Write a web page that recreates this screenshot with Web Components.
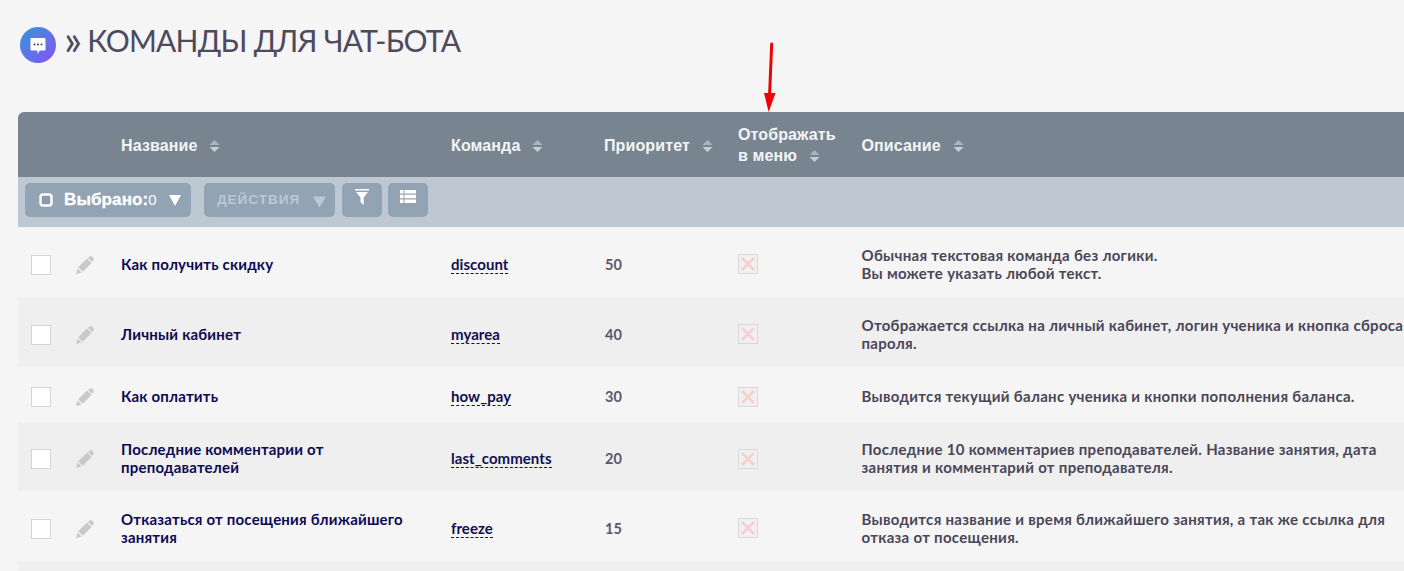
<!DOCTYPE html>
<html lang="ru">
<head>
<meta charset="utf-8">
<title>Команды для чат-бота</title>
<style>
html,body{margin:0;padding:0;background:#f5f5f5;overflow:hidden;height:571px}
body{font-family:"Lato","Liberation Sans",sans-serif;color:#4a4658}
</style>
</head>
<body>
<template id="t-title">
<style>
:host{display:flex;align-items:flex-start;height:112px;box-sizing:border-box;padding:27px 0 0 20px;gap:8px;color:#4d4a5c}
.logo{width:36px;height:36px;flex:none}
h1{margin:-5px 0 0;font:400 30px/36px "Lato",sans-serif;letter-spacing:-.75px;white-space:nowrap}
.q{font-size:42px;line-height:0;margin-right:6px;vertical-align:-3px}
</style>
<svg class="logo" viewBox="0 0 36 36">
<defs><linearGradient id="g" x1="0.1" y1="0.1" x2="0.9" y2="0.9"><stop offset="0" stop-color="#3f8fe0"/><stop offset="1" stop-color="#7b5bee"/></linearGradient></defs>
<circle cx="18" cy="18" r="18" fill="url(#g)"/>
<path d="M11.500 11h13a1 1 0 0 1 1 1v10.500a1 1 0 0 1-1 1h-4.500l-2.500 3.500v-3.500h-6a1 1 0 0 1-1-1V12a1 1 0 0 1 1-1z" fill="#fff"/>
<circle cx="14.500" cy="17.500" r="1" fill="#3c3a55"/><circle cx="18" cy="17.500" r="1" fill="#3c3a55"/><circle cx="21.500" cy="17.500" r="1" fill="#3c3a55"/>
</svg>
<h1><span class="q">»</span>КОМАНДЫ ДЛЯ ЧАТ-БОТА</h1>
</template>

<template id="t-sort">
<style>:host{display:inline-block;width:11px;height:14px;margin-left:var(--gap,12px);vertical-align:-2px}svg{display:block}</style>
<svg width="11" height="14" viewBox="0 0 11 14"><path d="M5.500 1 10.500 6H.5z" fill="#a9b4bd"/><path d="M.5 8h10l-5 5z" fill="#c5ccd3"/></svg>
</template>

<template id="t-table">
<style>
:host{display:block;position:relative;margin-left:18px;width:1386px;--cols:103px 330px 153px 134px 123.500px 1fr}
.wrap{border-radius:6px 0 0 0;overflow:hidden}
</style>
<div class="wrap"><slot></slot></div>
</template>

<template id="t-head">
<style>
:host{display:grid;grid-template-columns:var(--cols);height:65px;box-sizing:border-box;padding-top:1px;background:#78848f;color:#f3f5f6;align-items:center;font:700 16px/21px "Liberation Sans",sans-serif;letter-spacing:.12px}
</style>
<slot></slot>
</template>

<template id="t-bar">
<style>
:host{display:flex;height:50px;background:#bdc8d2;box-sizing:border-box;padding:6px 7px 0;align-items:flex-start}
</style>
<slot></slot>
</template>

<template id="t-btn">
<style>
:host{display:inline-flex;align-items:center;height:34px;background:#92a3b4;border-radius:5px;box-sizing:border-box;color:#fff;font:700 17px/36px "Liberation Sans",sans-serif;white-space:nowrap}
</style>
<slot></slot>
</template>

<template id="t-row">
<style>
:host{display:grid;grid-template-columns:var(--cols);align-items:center;box-sizing:border-box;padding-top:5px;min-height:55px;background:#f5f5f5;font:700 15px/18px "Lato",sans-serif;color:#4a4658}
:host([alt]){background:#efefef}
.sel{display:flex;align-items:center;gap:24px;padding-left:13px}
.box{width:18px;height:18px;background:#fff;border:1px solid #d4d4d4;flex:none}
.name{color:#0c0a52;padding-right:25px;letter-spacing:.2px;margin-top:-2px}
.cmd{margin-top:-1px}
.cmd span{color:#12104f;border-bottom:1px dashed #12104f;letter-spacing:.05px;display:inline-block;line-height:17px}
.pri{color:#5a5768;font-size:14.500px;padding-left:1px}
.x{display:block;margin-top:-1px}
.desc{letter-spacing:.3px;margin:-2px -10px 0 0}
</style>
<div class="sel"><span class="box"></span>
<svg width="20" height="20" viewBox="0 0 20 20"><path d="M14.800 1.500a1.500 1.500 0 0 1 2 0l1.700 1.700a1.500 1.500 0 0 1 0 2L17 7l-4-4zM12 3.500l4.500 4.500-8.800 8.800-4.500-4.500zM2.600 13.500l3.900 3.900L1 19z" fill="#c9c9c9"/></svg>
</div>
<div class="name"><slot name="name"></slot></div>
<div class="cmd"><span><slot name="cmd"></slot></span></div>
<div class="pri"><slot name="pri"></slot></div>
<div><svg class="x" width="20" height="20" viewBox="0 0 20 20"><rect x=".5" y=".5" width="19" height="19" fill="#f1efef" stroke="#d6d9dc"/><path d="M4 4l12 12M16 4 4 16" stroke="#f6cfcf" stroke-width="2.600"/></svg></div>
<div class="desc"><slot name="desc"></slot></div>
</template>

<template id="t-stripe">
<style>:host{display:block;height:10px;background:#efefef}</style>
</template>

<template id="t-arrow">
<style>:host{position:absolute;left:746px;top:-70px;width:14px;height:70px;display:block}svg{display:block}</style>
<svg width="14" height="70" viewBox="0 0 14 70"><path d="M7.700 2 5.600 52" stroke="#f00000" stroke-width="3" stroke-linecap="round" fill="none"/><path d="M0 51H11.500L4.700 70z" fill="#f00000"/></svg>
</template>

<script>
function def(tag,tpl){customElements.define(tag,class extends HTMLElement{constructor(){super();this.attachShadow({mode:'open'}).appendChild(document.getElementById(tpl).content.cloneNode(true));}});}
def('page-title','t-title');def('sort-mark','t-sort');def('cmd-table','t-table');def('cmd-head','t-head');def('cmd-bar','t-bar');def('bar-btn','t-btn');def('cmd-row','t-row');def('cmd-stripe','t-stripe');def('red-arrow','t-arrow');
</script>

<page-title></page-title>
<cmd-table>
<cmd-head>
<div></div>
<div>Название<sort-mark></sort-mark></div>
<div>Команда<sort-mark></sort-mark></div>
<div>Приоритет<sort-mark></sort-mark></div>
<div>Отображать<br>в меню<sort-mark></sort-mark></div>
<div>Описание<sort-mark></sort-mark></div>
</cmd-head>
<cmd-bar>
<bar-btn style="width:166px;padding-left:14px">
<svg width="14" height="14" viewBox="0 0 14 14" style="margin-right:11px"><rect x="1.500" y="1.500" width="11" height="11" rx="2.500" fill="#8a9bac" stroke="#fff" stroke-width="2.400"/></svg>
<span style="letter-spacing:.1px;-webkit-text-stroke:.3px #fff">Выбрано:</span><span style="font-weight:400;font-size:15px">0</span>
<svg width="12" height="12" viewBox="0 0 12 12" style="margin-left:12px"><path d="M0 1h12L6 12z" fill="#fff"/></svg>
</bar-btn>
<bar-btn style="width:131px;margin-left:13px;padding-left:13px;color:#bdc8d2;font-size:13.500px;letter-spacing:1px">ДЕЙСТВИЯ
<svg width="13" height="13" viewBox="0 0 14 13" style="margin-left:13px;margin-top:3px"><path d="M0 1h14L7 13z" fill="#bdc8d2"/></svg>
</bar-btn>
<bar-btn style="width:40px;margin-left:7px;justify-content:center;align-items:flex-start;padding-top:6px">
<svg width="14" height="16" viewBox="0 0 14 16"><path d="M0 0h14v1.500H0zM1 3h12L8.700 8.500V16L5.500 13V8.500z" fill="#fff"/></svg>
</bar-btn>
<bar-btn style="width:40px;margin-left:6px;justify-content:center;align-items:flex-start;padding-top:7px">
<svg width="16" height="13" viewBox="0 0 16 13"><path d="M0 0h16v3.500H0zM0 4.700h16v3.600H0zM0 9.500h16V13H0z" fill="#fff"/><path d="M4 0v13" stroke="#92a3b4" stroke-width="1"/></svg>
</bar-btn>
</cmd-bar>
<cmd-row style="min-height:70px"><span slot="name">Как получить скидку</span><span slot="cmd">discount</span><span slot="pri">50</span><span slot="desc">Обычная текстовая команда без логики.<br>Вы можете указать любой текст.</span></cmd-row>
<cmd-row alt style="min-height:70px"><span slot="name">Личный кабинет</span><span slot="cmd">myarea</span><span slot="pri">40</span><span slot="desc">Отображается ссылка на личный кабинет, логин ученика и кнопка сброса пароля.</span></cmd-row>
<cmd-row><span slot="name">Как оплатить</span><span slot="cmd">how_pay</span><span slot="pri">30</span><span slot="desc">Выводится текущий баланс ученика и кнопки пополнения баланса.</span></cmd-row>
<cmd-row alt style="min-height:69px"><span slot="name">Последние комментарии от преподавателей</span><span slot="cmd">last_comments</span><span slot="pri">20</span><span slot="desc">Последние 10 комментариев преподавателей. Название занятия, дата занятия и комментарий от преподавателя.</span></cmd-row>
<cmd-row style="min-height:70px"><span slot="name">Отказаться от посещения ближайшего занятия</span><span slot="cmd">freeze</span><span slot="pri">15</span><span slot="desc">Выводится название и время ближайшего занятия, а так же ссылка для отказа от посещения.</span></cmd-row>
<cmd-stripe></cmd-stripe>
<red-arrow></red-arrow>
</cmd-table>
</body>
</html>
